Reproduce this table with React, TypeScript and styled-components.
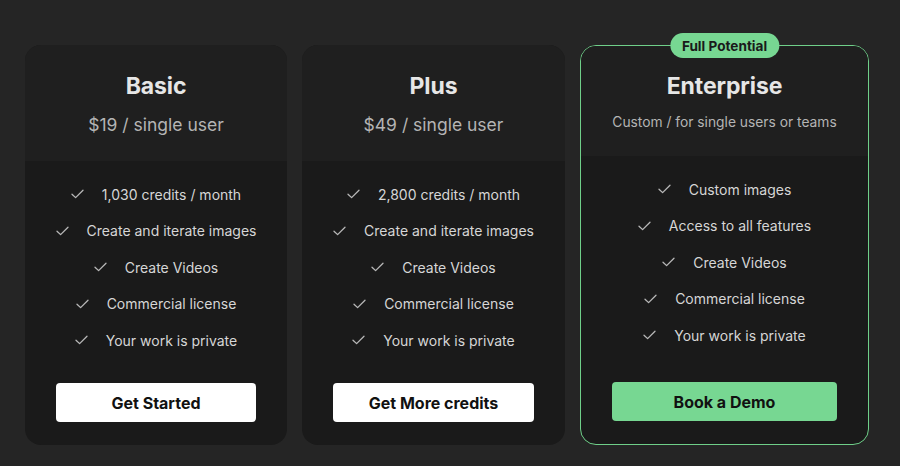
import React from "react";
import styled, { createGlobalStyle } from "styled-components";

const Global = createGlobalStyle`
  html, body { margin: 0; padding: 0; background: #252525; }
  body { font-family: Inter, "Noto Sans", sans-serif; -webkit-font-smoothing: antialiased; }
  * { box-sizing: border-box; }
`;

const Page = styled.div`
  width: 900px;
  height: 466px;
  background: #252525;
  padding: 45px 0 0 25px;
  display: flex;
  align-items: flex-start;
`;

const Row = styled.div`
  display: flex;
  gap: 15px;
  align-items: stretch;
  height: 400px;
`;

const Card = styled.div<{ $w: number; $featured?: boolean }>`
  position: relative;
  width: ${(p) => p.$w}px;
  border-radius: 16px;
  background: #1a1a1a;
  display: flex;
  flex-direction: column;
  border: ${(p) => (p.$featured ? "1px solid #6fcf89" : "none")};
`;

const Header = styled.div<{ $featured?: boolean }>`
  background: #1f1f1f;
  border-radius: ${(p) => (p.$featured ? "15px 15px 0 0" : "16px 16px 0 0")};
  height: ${(p) => (p.$featured ? 110 : 116)}px;
  padding-top: ${(p) => (p.$featured ? 26 : 27)}px;
  display: flex;
  flex-direction: column;
  align-items: center;
`;

const Title = styled.div`
  font-size: 23px;
  font-weight: 700;
  line-height: 28px;
  color: #e6e6e6;
  letter-spacing: -0.1px;
`;

const Price = styled.div<{ $small?: boolean }>`
  margin-top: ${(p) => (p.$small ? 12 : 13)}px;
  font-size: ${(p) => (p.$small ? 13.8 : 17.5)}px;
  line-height: ${(p) => (p.$small ? 20 : 24)}px;
  color: #b4b4b4;
  white-space: nowrap;
`;

const Body = styled.div`
  flex: 1;
  display: flex;
  flex-direction: column;
  align-items: center;
  padding: 23px 31px 23px;
`;

const List = styled.ul`
  list-style: none;
  margin: 0;
  padding: 0;
  display: flex;
  flex-direction: column;
  align-items: center;
  gap: 16.5px;
`;

const Item = styled.li`
  display: flex;
  align-items: center;
  gap: 18px;
  height: 20px;
  font-size: 14px;
  color: #d6d6d6;
  white-space: nowrap;
`;

const Button = styled.button<{ $green?: boolean }>`
  margin-top: auto;
  width: 100%;
  height: 39px;
  border: none;
  border-radius: 4px;
  background: ${(p) => (p.$green ? "#77d792" : "#ffffff")};
  color: #111111;
  font-family: Inter, sans-serif;
  font-size: 16px;
  font-weight: 700;
  cursor: pointer;
`;

const Badge = styled.div`
  position: absolute;
  top: -13px;
  left: 50%;
  transform: translateX(-50%);
  height: 25px;
  padding: 0 12px;
  border-radius: 13px;
  background: #77d792;
  color: #1a1a1a;
  font-size: 13.6px;
  font-weight: 700;
  display: flex;
  align-items: center;
  white-space: nowrap;
`;

const Check = () => (
  <svg width="13" height="10" viewBox="0 0 13 10" fill="none">
    <path d="M1 5.2 L4.6 8.6 L12 1.2" stroke="#b8b8b8" strokeWidth="1.3" strokeLinecap="round" strokeLinejoin="round" />
  </svg>
);

type Plan = {
  title: string;
  price: string;
  features: string[];
  cta: string;
  w: number;
  featured?: boolean;
};

const plans: Plan[] = [
  {
    title: "Basic",
    price: "$19 / single user",
    features: ["1,030 credits / month", "Create and iterate images", "Create Videos", "Commercial license", "Your work is private"],
    cta: "Get Started",
    w: 262,
  },
  {
    title: "Plus",
    price: "$49 / single user",
    features: ["2,800 credits / month", "Create and iterate images", "Create Videos", "Commercial license", "Your work is private"],
    cta: "Get More credits",
    w: 263,
  },
  {
    title: "Enterprise",
    price: "Custom / for single users or teams",
    features: ["Custom images", "Access to all features", "Create Videos", "Commercial license", "Your work is private"],
    cta: "Book a Demo",
    w: 289,
    featured: true,
  },
];

export default function App() {
  return (
    <>
      <Global />
      <Page>
        <Row>
          {plans.map((p) => (
            <Card key={p.title} $w={p.w} $featured={p.featured}>
              {p.featured && <Badge>Full Potential</Badge>}
              <Header $featured={p.featured}>
                <Title>{p.title}</Title>
                <Price $small={p.featured}>{p.price}</Price>
              </Header>
              <Body>
                <List>
                  {p.features.map((f) => (
                    <Item key={f}>
                      <Check />
                      <span>{f}</span>
                    </Item>
                  ))}
                </List>
                <Button $green={p.featured}>{p.cta}</Button>
              </Body>
            </Card>
          ))}
        </Row>
      </Page>
    </>
  );
}
